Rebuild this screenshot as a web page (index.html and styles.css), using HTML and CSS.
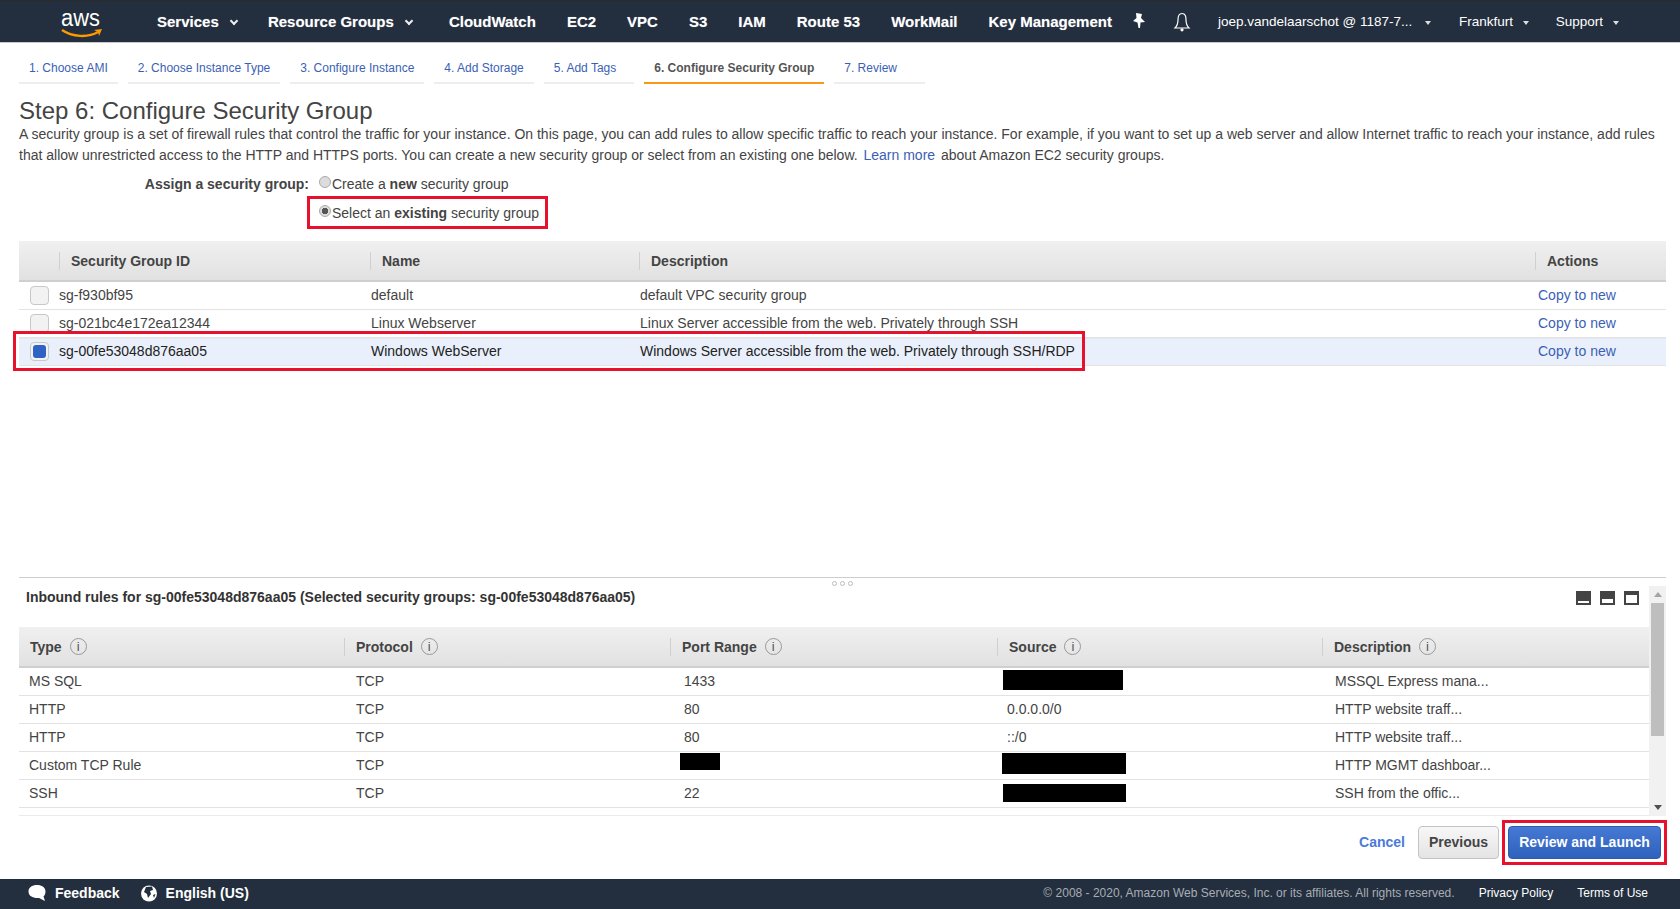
FILE: index.html
```html
<!DOCTYPE html>
<html lang="en">
<head>
    <meta charset="UTF-8">
    <title>Launch instance wizard</title>
    <link rel="stylesheet" href="styles.css">
</head>
<body>
    <header class="topnav">
        <div class="logo">
            <span class="logo-text">aws</span>
            <svg class="logo-smile" width="42" height="11" viewBox="0 0 42 11">
                <path d="M1 2 C11 9 27 10 37 4" fill="none" stroke="#f90" stroke-width="2.4"/>
                <path d="M33 2 L41 1 L38 8 L37 4 Z" fill="#f90"/>
            </svg>
        </div>
        <a class="nav-main nav-services">Services <span class="chev"></span></a>
        <a class="nav-main nav-groups">Resource Groups <span class="chev"></span></a>
        <a class="nav-main">CloudWatch</a>
        <a class="nav-main">EC2</a>
        <a class="nav-main">VPC</a>
        <a class="nav-main">S3</a>
        <a class="nav-main">IAM</a>
        <a class="nav-main">Route 53</a>
        <a class="nav-main">WorkMail</a>
        <a class="nav-main">Key Management</a>
        <svg class="nav-pin" width="14" height="16" viewBox="0 0 14 16">
            <path d="M4 0 L10 1 L9 5 L13 9 L8.500 9.500 L8 15 L6.500 15 L5.500 9.500 L1 8 L4.500 5 Z" fill="#fff"/>
        </svg>
        <svg class="nav-bell" width="18" height="20" viewBox="0 0 18 20">
            <path d="M9 1.500 C5.500 1.500 5 4.500 5 8 C5 12 4 14 2 16 L16 16 C14 14 13 12 13 8 C13 4.500 12.500 1.500 9 1.500 Z" fill="none" stroke="#fff" stroke-width="1.200"/>
            <circle cx="9" cy="17.800" r="1.600" fill="#fff"/>
        </svg>
        <a class="nav-sub nav-user">joep.vandelaarschot @ 1187-7... <span class="caret"></span></a>
        <a class="nav-sub nav-region">Frankfurt <span class="caret"></span></a>
        <a class="nav-sub nav-support">Support <span class="caret"></span></a>
    </header>

    <nav class="steps">
        <a class="step">1. Choose AMI</a>
        <a class="step">2. Choose Instance Type</a>
        <a class="step">3. Configure Instance</a>
        <a class="step">4. Add Storage</a>
        <a class="step step-wide">5. Add Tags</a>
        <a class="step step-active">6. Configure Security Group</a>
        <a class="step step-last">7. Review</a>
    </nav>

    <main class="wizard">
        <section class="intro">
            <h1>Step 6: Configure Security Group</h1>
            <p>A security group is a set of firewall rules that control the traffic for your instance. On this page, you can add rules to allow specific traffic to reach your instance. For example, if you want to set up a web server and allow Internet traffic to reach your instance, add rules that allow unrestricted access to the HTTP and HTTPS ports. You can create a new security group or select from an existing one below. <a class="link learn">Learn more</a> about Amazon EC2 security groups.</p>
            <div class="assign">
                <span class="assign-label">Assign a security group:</span>
                <div class="assign-options">
                    <label class="radio-row"><span class="radio"></span>Create a <b>new</b> security group</label>
                    <label class="radio-row radio-row-boxed"><span class="radio radio-on"></span>Select an <b>existing</b> security group</label>
                </div>
            </div>
        </section>

        <section class="groups">
            <div class="groups-head">
                <div class="cell g-check"></div>
                <div class="cell g-id"><span class="sep">Security Group ID</span></div>
                <div class="cell g-name"><span class="sep">Name</span></div>
                <div class="cell g-desc"><span class="sep">Description</span></div>
                <div class="cell g-act"><span class="sep">Actions</span></div>
            </div>
            <div class="group-row">
                <div class="cell g-check"><span class="check"></span></div>
                <div class="cell g-id">sg-f930bf95</div>
                <div class="cell g-name">default</div>
                <div class="cell g-desc">default VPC security group</div>
                <div class="cell g-act"><a class="link">Copy to new</a></div>
            </div>
            <div class="group-row">
                <div class="cell g-check"><span class="check"></span></div>
                <div class="cell g-id">sg-021bc4e172ea12344</div>
                <div class="cell g-name">Linux Webserver</div>
                <div class="cell g-desc">Linux Server accessible from the web. Privately through SSH</div>
                <div class="cell g-act"><a class="link">Copy to new</a></div>
            </div>
            <div class="group-row group-row-on">
                <div class="cell g-check"><span class="check check-on"></span></div>
                <div class="cell g-id">sg-00fe53048d876aa05</div>
                <div class="cell g-name">Windows WebServer</div>
                <div class="cell g-desc">Windows Server accessible from the web. Privately through SSH/RDP</div>
                <div class="cell g-act"><a class="link">Copy to new</a></div>
            </div>
            <div class="row-highlight"></div>
        </section>

        <section class="rules">
            <div class="rules-grip"><i></i><i></i><i></i></div>
            <div class="rules-title">
                <span>Inbound rules for sg-00fe53048d876aa05 (Selected security groups: sg-00fe53048d876aa05)</span>
                <div class="pane-icons">
                    <span class="pane pane-low"></span>
                    <span class="pane pane-mid"></span>
                    <span class="pane pane-high"></span>
                </div>
            </div>
            <div class="rules-body">
                <div class="rules-table">
                    <div class="rules-head">
                        <div class="cell r-type"><span class="sep">Type <span class="info">i</span></span></div>
                        <div class="cell r-proto"><span class="sep">Protocol <span class="info">i</span></span></div>
                        <div class="cell r-port"><span class="sep">Port Range <span class="info">i</span></span></div>
                        <div class="cell r-src"><span class="sep">Source <span class="info">i</span></span></div>
                        <div class="cell r-desc"><span class="sep">Description <span class="info">i</span></span></div>
                    </div>
                    <div class="rule-row">
                        <div class="cell r-type">MS SQL</div>
                        <div class="cell r-proto">TCP</div>
                        <div class="cell r-port">1433</div>
                        <div class="cell r-src"><span class="redact redact-a"></span></div>
                        <div class="cell r-desc">MSSQL Express mana...</div>
                    </div>
                    <div class="rule-row">
                        <div class="cell r-type">HTTP</div>
                        <div class="cell r-proto">TCP</div>
                        <div class="cell r-port">80</div>
                        <div class="cell r-src">0.0.0.0/0</div>
                        <div class="cell r-desc">HTTP website traff...</div>
                    </div>
                    <div class="rule-row">
                        <div class="cell r-type">HTTP</div>
                        <div class="cell r-proto">TCP</div>
                        <div class="cell r-port">80</div>
                        <div class="cell r-src">::/0</div>
                        <div class="cell r-desc">HTTP website traff...</div>
                    </div>
                    <div class="rule-row">
                        <div class="cell r-type">Custom TCP Rule</div>
                        <div class="cell r-proto">TCP</div>
                        <div class="cell r-port"><span class="redact redact-port"></span></div>
                        <div class="cell r-src"><span class="redact redact-b"></span></div>
                        <div class="cell r-desc">HTTP MGMT dashboar...</div>
                    </div>
                    <div class="rule-row">
                        <div class="cell r-type">SSH</div>
                        <div class="cell r-proto">TCP</div>
                        <div class="cell r-port">22</div>
                        <div class="cell r-src"><span class="redact redact-c"></span></div>
                        <div class="cell r-desc">SSH from the offic...</div>
                    </div>
                </div>
                <div class="scrollbar">
                    <span class="scroll-up"></span>
                    <span class="scroll-thumb"></span>
                    <span class="scroll-down"></span>
                </div>
            </div>
        </section>

        <section class="actions">
            <a class="cancel">Cancel</a>
            <button class="btn btn-prev">Previous</button>
            <div class="btn-box"><button class="btn btn-launch">Review and Launch</button></div>
        </section>
    </main>

    <footer class="bottom">
        <svg class="foot-icon" width="20" height="18" viewBox="0 0 20 18">
            <path d="M10 1 C15 1 18.500 3.500 18.500 7.500 C18.500 10 17.500 11.500 16.500 12.500 L18 17 L12 14 C6 14.500 1.500 12 1.500 7.500 C1.500 3.500 5 1 10 1 Z" fill="#fff"/>
        </svg>
        <a class="foot-main foot-feedback">Feedback</a>
        <svg class="foot-icon foot-globe" width="16" height="17" viewBox="0 0 16 17">
            <circle cx="8" cy="8.500" r="8" fill="#fff"/>
            <path d="M5 2 L11 1.500 L12 5 L9 6 L10 9 L7 13 L6 9 L3 7 Z M12 10 L14.500 9 L13 13 Z" fill="#232f3e"/>
        </svg>
        <a class="foot-main">English (US)</a>
        <span class="foot-copy">&copy; 2008 - 2020, Amazon Web Services, Inc. or its affiliates. All rights reserved.</span>
        <a class="foot-link">Privacy Policy</a>
        <a class="foot-link foot-last">Terms of Use</a>
    </footer>
</body>
</html>
```

FILE: styles.css
```css
* {
    box-sizing: border-box;
}
body {
    margin: 0;
    height: 909px;
    overflow: hidden;
    display: flex;
    flex-direction: column;
    font-family: "Liberation Sans", Arial, sans-serif;
    font-size: 14px;
    color: #444;
    background: #fff;
}
a {
    cursor: pointer;
}
.link {
    color: #3b5fb5;
}

/* top bar */
.topnav {
    flex: 0 0 43px;
    display: flex;
    align-items: center;
    padding-left: 61px;
    background: #232f3e;
    border-top: 1px solid #2b2b2b;
    border-bottom: 1px solid #c9c9c9;
    color: #fff;
}
.logo {
    width: 96px;
    height: 38px;
    position: relative;
}
.logo-text {
    display: block;
    font-size: 23px;
    line-height: 22px;
    margin-top: 4px;
    transform: scaleX(0.95);
    transform-origin: left;
}
.logo-smile {
    position: absolute;
    left: 0;
    top: 25px;
}
.nav-main {
    font-weight: bold;
    font-size: 15px;
    margin-right: 31px;
    white-space: nowrap;
    text-shadow: 0 0 1px rgba(255, 255, 255, 0.4);
}
.nav-services {
    margin-right: 29px;
}
.nav-groups {
    margin-right: 35px;
}
.chev {
    display: inline-block;
    width: 6px;
    height: 6px;
    margin: 0 2px 3px 8px;
    border-right: 2px solid #eee;
    border-bottom: 2px solid #eee;
    transform: rotate(45deg);
}
.nav-pin {
    margin: 0 27px 2px -11px;
}
.nav-bell {
    margin-right: 27px;
}
.nav-sub {
    font-size: 13.500px;
    white-space: nowrap;
}
.nav-user {
    margin-right: 28px;
}
.nav-region {
    margin-right: 27px;
}
.caret {
    display: inline-block;
    width: 0;
    height: 0;
    margin-left: 6px;
    margin-bottom: 1px;
    border-left: 3.500px solid transparent;
    border-right: 3.500px solid transparent;
    border-top: 4px solid #ddd;
}
.nav-user .caret {
    margin-left: 9px;
}

/* wizard steps */
.steps {
    flex: 0 0 42px;
    display: flex;
    gap: 10px;
    padding: 0 0 0 19px;
}
.step {
    height: 41px;
    padding: 18px 10px 0 10px;
    font-size: 12px;
    color: #3b5fb5;
    border-bottom: 2px solid #eee;
    white-space: nowrap;
}
.step-wide {
    padding-right: 18px;
}
.step-last {
    padding-right: 28px;
}
.step-active {
    font-weight: bold;
    color: #555;
    border-bottom-color: #f7981d;
}

/* intro */
.wizard {
    flex: 1;
    display: flex;
    flex-direction: column;
    padding: 0 14px 0 19px;
    min-height: 0;
}
.intro h1 {
    margin: 12px 0 0;
    font-size: 24px;
    font-weight: normal;
    line-height: 27px;
    color: #444;
}
.intro p {
    margin: 0;
    line-height: 21px;
}
.learn {
    margin: 0 2px;
}
.assign {
    display: flex;
    margin-top: 5px;
}
.assign-label {
    width: 290px;
    padding-top: 5px;
    text-align: right;
    font-weight: bold;
    line-height: 16px;
}
.assign-options {
    display: flex;
    flex-direction: column;
}
.radio-row {
    display: flex;
    align-items: center;
    height: 25px;
    padding-left: 10px;
    white-space: pre;
}
.radio-row-boxed {
    width: 241px;
    height: 33px;
    margin-left: -2px;
    padding-left: 9px;
    border: 3px solid #e8112d;
}
.radio {
    width: 12px;
    height: 12px;
    margin-right: 1px;
    margin-bottom: 3px;
    border-radius: 50%;
    border: 1px solid #aaa;
    background: #dcdcdc;
}
.radio-on {
    background: radial-gradient(circle, #555 0 3px, #dcdcdc 3.500px);
}

/* security groups table */
.cell {
    white-space: nowrap;
}
.groups {
    position: relative;
    margin-top: 12px;
}
.groups-head, .rules-head {
    display: flex;
    align-items: center;
    height: 41px;
    font-weight: bold;
    background: linear-gradient(#f0f0f0, #e1e1e1);
    border-bottom: 2px solid #cfcfcf;
}
.sep {
    display: block;
    padding-left: 11px;
    line-height: 18px;
    border-left: 1px solid #d0d0d0;
}
.g-name .sep, .g-desc .sep, .g-act .sep {
    margin-left: -1px;
}
.group-row {
    display: flex;
    align-items: center;
    height: 28px;
    padding-bottom: 1px;
    border-bottom: 1px solid #e3e3e3;
}
.group-row-on {
    padding-bottom: 2px;
    background: #e9f0fb;
    color: #222;
    border-top: 1px solid #e3e7ef;
}
.g-check {
    flex: 0 0 40px;
    padding-left: 11px;
}
.g-id {
    flex: 0 0 312px;
}
.g-name {
    flex: 0 0 269px;
}
.g-desc {
    flex: 0 0 896px;
}
.g-act .link {
    padding-left: 2px;
}
.check {
    display: block;
    width: 19px;
    height: 19px;
    border: 1px solid #c8c8c8;
    border-radius: 4px;
    background: #f2f2f2;
}
.check-on {
    padding: 2px;
}
.check-on::after {
    content: "";
    display: block;
    width: 13px;
    height: 13px;
    border-radius: 3px;
    background: #2f62c4;
}
.row-highlight {
    position: absolute;
    left: -6px;
    top: 90px;
    width: 1072px;
    height: 40px;
    border: 3px solid #e8112d;
}

/* inbound rules */
.rules {
    position: relative;
    margin-top: 211px;
    border-top: 1px solid #ccc;
}
.rules-grip {
    position: absolute;
    left: 813px;
    top: 3px;
    display: flex;
    gap: 3px;
}
.rules-grip i {
    width: 5px;
    height: 5px;
    border-radius: 50%;
    border: 1px solid #bbb;
}
.rules-title {
    position: relative;
    height: 49px;
    padding: 11px 0 0 7px;
    font-weight: bold;
    color: #333;
}
.pane-icons {
    position: absolute;
    right: 27px;
    top: 13px;
    display: flex;
    gap: 9px;
}
.pane {
    display: block;
    width: 15px;
    height: 14px;
    background: #444;
    position: relative;
}
.pane::after {
    content: "";
    position: absolute;
    left: 2px;
    right: 2px;
    background: #fff;
}
.pane-low::after {
    bottom: 2px;
    height: 2px;
}
.pane-mid::after {
    bottom: 2px;
    height: 4px;
}
.pane-high::after {
    bottom: 2px;
    height: 8px;
}
.rules-body {
    display: flex;
    margin-top: -41px;
}
.rules-table {
    flex: 1;
    padding-top: 41px;
    padding-bottom: 7px;
    border-bottom: 1px solid #eaeaea;
}
.rules-head .sep {
    display: flex;
    align-items: center;
    gap: 8px;
}
.rules-head .r-type .sep {
    border-left: 0;
}
.rule-row {
    display: flex;
    align-items: center;
    height: 28px;
    padding-bottom: 2px;
    border-bottom: 1px solid #e3e3e3;
}
.r-type {
    flex: 0 0 325px;
}
.r-proto {
    flex: 0 0 326px;
}
.r-port {
    flex: 0 0 327px;
}
.r-src {
    flex: 0 0 325px;
}
.rule-row .cell {
    padding-left: 10px;
}
.rule-row .r-proto {
    padding-left: 12px;
}
.rule-row .r-port {
    padding-left: 14px;
}
.rule-row .r-desc {
    padding-left: 13px;
}
.info {
    display: inline-block;
    width: 17px;
    height: 17px;
    border: 1px solid #999;
    border-radius: 50%;
    font-weight: normal;
    font-size: 13px;
    line-height: 15px;
    text-align: center;
    color: #555;
}
.redact {
    display: block;
    background: #000;
}
.redact-a {
    width: 120px;
    height: 20px;
    margin: -2px 0 0 -4px;
}
.redact-port {
    width: 40px;
    height: 17px;
    margin: -6px 0 0 -4px;
}
.redact-b {
    width: 124px;
    height: 21px;
    margin: -3px 0 0 -5px;
}
.redact-c {
    width: 123px;
    height: 18px;
    margin: 1px 0 0 -4px;
}
.scrollbar {
    flex: 0 0 17px;
    display: flex;
    flex-direction: column;
    align-items: center;
    background: #f1f1f1;
}
.scroll-up, .scroll-down {
    width: 0;
    height: 0;
    border-left: 4px solid transparent;
    border-right: 4px solid transparent;
}
.scroll-up {
    flex: 0 0 5px;
    margin: 6px 0;
    border-bottom: 5px solid #a5a5a5;
}
.scroll-thumb {
    width: 13px;
    height: 133px;
    background: #bebebe;
}
.scroll-down {
    flex: 0 0 5px;
    margin-top: auto;
    margin-bottom: 6px;
    border-top: 5px solid #505050;
}

/* action buttons */
.actions {
    display: flex;
    justify-content: flex-end;
    align-items: center;
    margin-top: 4px;
    margin-right: -1px;
}
.cancel {
    margin-right: 13px;
    margin-bottom: 1px;
    font-weight: bold;
    color: #4b7bd8;
}
.btn {
    height: 33px;
    padding-bottom: 3px;
    border-radius: 4px;
    font-family: inherit;
    font-size: 14px;
    font-weight: bold;
}
.btn-prev {
    width: 81px;
    margin-right: 3px;
    color: #444;
    border: 1px solid #c4c4c4;
    background: linear-gradient(#f7f7f7, #e4e4e4);
}
.btn-box {
    display: flex;
    align-items: center;
    justify-content: center;
    width: 165px;
    height: 45px;
    border: 3px solid #e8112d;
}
.btn-launch {
    width: 153px;
    color: #fff;
    border: 1px solid #2d5cae;
    background: linear-gradient(#4579d3, #2f62bd);
}

/* footer */
.bottom {
    flex: 0 0 30px;
    display: flex;
    align-items: center;
    padding-left: 27px;
    padding-bottom: 2px;
    background: #232f3e;
    color: #fff;
}
.foot-icon {
    margin-right: 8px;
}
.foot-main {
    font-weight: bold;
}
.foot-feedback {
    margin-right: 21px;
}
.foot-globe {
    margin-right: 9px;
}
.foot-copy {
    margin-left: auto;
    font-size: 12px;
    color: #a8adb3;
}
.foot-link {
    margin-left: 24px;
    font-size: 12px;
}
.foot-last {
    margin-right: 32px;
}
```
